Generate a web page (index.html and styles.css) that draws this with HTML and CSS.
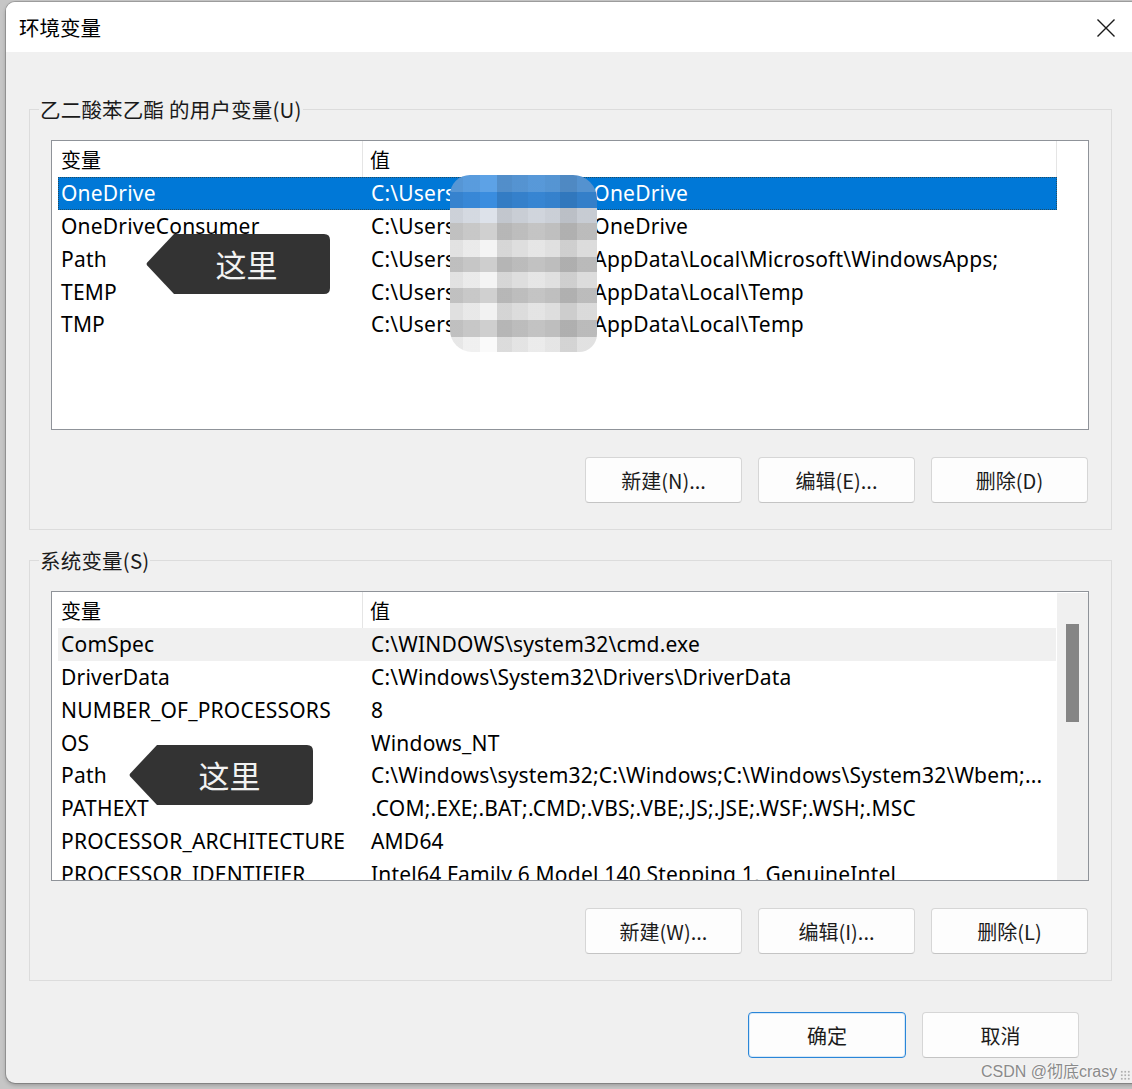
FILE: index.html
```html
<!DOCTYPE html>
<html lang="zh-CN">
<head>
<meta charset="utf-8">
<title>环境变量</title>
<link rel="stylesheet" href="styles.css">
</head>
<body>
<div class="dialog">
  <div class="titlebar">
    <span class="title">环境变量</span>
    <svg class="close" width="20" height="20" viewBox="0 0 20 20"><path d="M1.5 1.5 L18.5 18.5 M18.5 1.5 L1.5 18.5" stroke="#1a1a1a" stroke-width="1.4" fill="none"/></svg>
  </div>
  <div class="content">
    <div class="group">
      <div class="group-title">乙二酸苯乙酯 的用户变量(U)</div>
      <div class="list">
        <div class="list-head"><div class="hcell c1">变量</div><div class="hcell c2">值</div></div>
        <div class="row selected"><div class="cell c1">OneDrive</div><div class="cell c2">C:\Users\<span class="user"></span>\OneDrive</div></div>
        <div class="row"><div class="cell c1">OneDriveConsumer</div><div class="cell c2">C:\Users\<span class="user"></span>\OneDrive</div></div>
        <div class="row"><div class="cell c1">Path</div><div class="cell c2">C:\Users\<span class="user"></span>\AppData\Local\Microsoft\WindowsApps;</div></div>
        <div class="row"><div class="cell c1">TEMP</div><div class="cell c2">C:\Users\<span class="user"></span>\AppData\Local\Temp</div></div>
        <div class="row"><div class="cell c1">TMP</div><div class="cell c2">C:\Users\<span class="user"></span>\AppData\Local\Temp</div></div>
        <div class="mosaic"></div>
        <div class="callout callout-user">
          <svg class="callout-bg" width="184" height="60" viewBox="0 0 184 60"><path d="M28 0 H178 Q184 0 184 6 V54 Q184 60 178 60 H28 L1.2 31.5 Q0 30 1.2 28.5 Z" fill="#333333"/></svg>
          <span class="callout-text">这里</span>
        </div>
      </div>
      <div class="buttons">
        <button class="btn">新建(N)...</button>
        <button class="btn">编辑(E)...</button>
        <button class="btn">删除(D)</button>
      </div>
    </div>

    <div class="group">
      <div class="group-title">系统变量(S)</div>
      <div class="list">
        <div class="list-body">
          <div class="list-main">
            <div class="list-head"><div class="hcell c1">变量</div><div class="hcell c2">值</div></div>
            <div class="row hover"><div class="cell c1">ComSpec</div><div class="cell c2">C:\WINDOWS\system32\cmd.exe</div></div>
            <div class="row"><div class="cell c1">DriverData</div><div class="cell c2">C:\Windows\System32\Drivers\DriverData</div></div>
            <div class="row"><div class="cell c1">NUMBER_OF_PROCESSORS</div><div class="cell c2">8</div></div>
            <div class="row"><div class="cell c1">OS</div><div class="cell c2">Windows_NT</div></div>
            <div class="row"><div class="cell c1">Path</div><div class="cell c2">C:\Windows\system32;C:\Windows;C:\Windows\System32\Wbem;...</div></div>
            <div class="row"><div class="cell c1">PATHEXT</div><div class="cell c2">.COM;.EXE;.BAT;.CMD;.VBS;.VBE;.JS;.JSE;.WSF;.WSH;.MSC</div></div>
            <div class="row"><div class="cell c1">PROCESSOR_ARCHITECTURE</div><div class="cell c2">AMD64</div></div>
            <div class="row"><div class="cell c1">PROCESSOR_IDENTIFIER</div><div class="cell c2">Intel64 Family 6 Model 140 Stepping 1, GenuineIntel</div></div>
          </div>
          <div class="scrollbar"><div class="thumb"></div></div>
        </div>
        <div class="callout callout-sys">
          <svg class="callout-bg" width="184" height="60" viewBox="0 0 184 60"><path d="M28 0 H178 Q184 0 184 6 V54 Q184 60 178 60 H28 L1.2 31.5 Q0 30 1.2 28.5 Z" fill="#333333"/></svg>
          <span class="callout-text">这里</span>
        </div>
      </div>
      <div class="buttons">
        <button class="btn">新建(W)...</button>
        <button class="btn">编辑(I)...</button>
        <button class="btn">删除(L)</button>
      </div>
    </div>

    <div class="footer">
      <button class="btn primary">确定</button>
      <button class="btn">取消</button>
    </div>
  </div>
  <div class="watermark">CSDN @彻底crasy</div>
  <div class="grip"></div>
</div>
</body>
</html>
```

FILE: styles.css
```css
html, body {
  margin: 0;
  padding: 0;
}
body {
  width: 1132px;
  height: 1089px;
  overflow: hidden;
  background: #c6c6c6;
  font-family: "Noto Sans", "Noto Sans CJK SC", sans-serif;
  font-size: 20px;
  color: #000;
}
.dialog {
  position: relative;
  margin: 2px 0 0 6px;
  width: 1140px;
  height: 1081px;
  background: #f0f0f0;
  border-radius: 9px;
  box-shadow: 0 0 0 1px rgba(0,0,0,0.18), 0 2px 4px rgba(0,0,0,0.25);
  overflow: hidden;
}
.titlebar {
  height: 50px;
  background: #ffffff;
  display: flex;
  align-items: center;
  justify-content: space-between;
  padding: 0 0 0 13px;
  box-sizing: border-box;
}
.title {
  font-family: "Noto Sans CJK SC", sans-serif;
  font-size: 20.5px;
  color: #000;
}
.close {
  margin-right: 30px;
  margin-top: 1px;
}
.content {
  padding: 0 0 0 23px;
  width: 1083px;
  display: flex;
  flex-direction: column;
}
.group {
  box-sizing: border-box;
  height: 421px;
  border: 1px solid #dcdcdc;
  padding: 0 22px 0 21px;
  margin-top: 57px;
  display: flex;
  flex-direction: column;
}
.group + .group {
  margin-top: 30px;
}
.group-title {
  align-self: flex-start;
  margin: -13px 0 0 -12px;
  padding: 0 1px;
  height: 24px;
  line-height: 24px;
  background: #f0f0f0;
  font-family: "Noto Sans CJK SC", sans-serif;
  font-size: 20.5px;
  letter-spacing: 0.2px;
  color: #1a1a1a;
}
.list {
  position: relative;
  margin-top: 19px;
  height: 290px;
  box-sizing: border-box;
  border: 1px solid #8f9399;
  background: #fff;
  overflow: hidden;
}
.list-body {
  display: flex;
  height: 100%;
}
.list-main {
  width: 1005px;
  overflow: hidden;
}
.list-head {
  display: flex;
  height: 36px;
  width: 1005px;
  align-items: stretch;
}
.hcell {
  display: flex;
  align-items: center;
  font-family: "Noto Sans CJK SC", sans-serif;
  font-size: 20px;
  color: #000;
  box-sizing: border-box;
}
.hcell.c1 {
  width: 311px;
  padding-left: 9px;
  border-right: 1px solid #e5e5e5;
}
.hcell.c2 {
  width: 694px;
  padding-left: 7px;
  border-right: 1px solid #e5e5e5;
}
.row {
  display: flex;
  align-items: center;
  margin-left: 6px;
  width: 999px;
  height: 32.75px;
  white-space: nowrap;
  box-sizing: border-box;
  font-size: 21px;
  letter-spacing: 0.2px;
}
.row.selected {
  background: #0078d7;
  color: #fff;
  outline: 1px dotted rgba(60,40,0,0.55);
  outline-offset: -1px;
}
.row.hover {
  background: #f0f0f0;
}
.cell {
  overflow: hidden;
  box-sizing: border-box;
}
.cell.c1 {
  width: 305px;
  padding-left: 3px;
}
.cell.c2 {
  width: 694px;
  padding-left: 8px;
}
.user {
  display: inline-block;
  width: 122px;
}
.scrollbar {
  width: 31px;
  margin-left: 1px;
  margin-top: 1px;
  background: #f0f0f0;
  position: relative;
}
.thumb {
  margin: 31px 0 0 9px;
  width: 13px;
  height: 98px;
  background: #858585;
}
.mosaic {
  position: absolute;
  left: 398px;
  top: 34px;
  width: 147px;
  height: 177px;
  border-radius: 20px 24px 18px 22px;
  background-image:
    linear-gradient(to right,
      #ececec 0, #ececec 13px,
      #f5f5f5 13px, #f5f5f5 30px,
      #ffffff 30px, #ffffff 47px,
      #e0e0e0 47px, #e0e0e0 62px,
      #e8e8e8 62px, #e8e8e8 78px,
      #f0f0f0 78px, #f0f0f0 95px,
      #eaeaea 95px, #eaeaea 110px,
      #d8d8d8 110px, #d8d8d8 127px,
      #e6e6e6 127px, #e6e6e6 147px),
    linear-gradient(to bottom,
      #5da2e6 0, #5da2e6 17px,
      #3a8ddf 17px, #3a8ddf 33px,
      #dde2ea 33px, #dde2ea 48px,
      #d0d0d0 48px, #d0d0d0 65px,
      #f4f4f4 65px, #f4f4f4 82px,
      #cecece 82px, #cecece 97px,
      #f4f4f4 97px, #f4f4f4 113px,
      #d0d0d0 113px, #d0d0d0 128px,
      #f2f2f2 128px, #f2f2f2 145px,
      #cfcfcf 145px, #cfcfcf 162px,
      #fafafa 162px, #fafafa 177px);
  background-blend-mode: multiply;
}
.callout {
  position: absolute;
  width: 184px;
  height: 60px;
  display: flex;
  align-items: center;
  justify-content: center;
}
.callout-bg {
  position: absolute;
  left: 0;
  top: 0;
}
.callout-text {
  position: relative;
  font-family: "Noto Sans CJK SC", sans-serif;
  font-size: 31px;
  color: #f2f2f2;
  margin-left: 17px;
  margin-top: -2px;
}
.callout-user {
  left: 94px;
  top: 93px;
}
.callout-sys {
  left: 77px;
  top: 153px;
}
.buttons {
  display: flex;
  justify-content: flex-end;
  gap: 16px;
  margin-top: 27px;
  padding-right: 1px;
}
.btn {
  width: 157px;
  height: 46px;
  box-sizing: border-box;
  background: #fdfdfd;
  border: 1px solid #d6d6d6;
  border-bottom-color: #c4c4c4;
  border-radius: 4px;
  font-family: "Noto Sans CJK SC", sans-serif;
  font-size: 20px;
  color: #1b1b1b;
  padding: 0;
  margin: 0;
}
.btn.primary {
  border: 1px solid #2a86d8;
  box-shadow: inset 0 0 0 1px #d6e8f8;
  width: 158px;
}
.footer {
  display: flex;
  justify-content: flex-end;
  gap: 16px;
  margin-top: 31px;
  padding-right: 33px;
}
.watermark {
  position: absolute;
  left: 975px;
  top: 1056px;
  font-family: "Liberation Sans", "Noto Sans CJK SC", sans-serif;
  font-size: 16px;
  color: #8a8a8a;
  text-shadow: 0 0 2px #fff;
  white-space: nowrap;
}
.grip {
  position: absolute;
  left: 1114px;
  top: 1068px;
  width: 10px;
  height: 10px;
  background-image: radial-gradient(circle, #b0b0b0 1px, transparent 1.3px);
  background-size: 3.5px 3.5px;
}
```
